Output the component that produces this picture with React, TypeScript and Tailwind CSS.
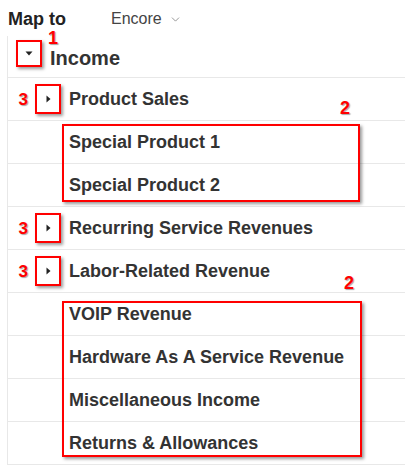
import { ChevronDown } from "lucide-react"

const redNum =
  "absolute text-[18px] font-bold leading-none text-[#ff0000] [text-shadow:1px_1px_1px_rgba(0,0,0,0.35)]"
const redBox = "border-2 border-[#ff0000] shadow-[2px_2px_3px_rgba(0,0,0,0.4)]"

function CaretRight() {
  return (
    <svg width="5" height="8" viewBox="0 0 5 8">
      <path d="M0.5 0.5 L4.5 4 L0.5 7.5 Z" fill="#222" />
    </svg>
  )
}

function CaretDown() {
  return (
    <svg width="8" height="5" viewBox="0 0 8 5">
      <path d="M0.5 0.5 L7.5 0.5 L4 4.5 Z" fill="#222" />
    </svg>
  )
}

function ParentRow({ label }: { label: string }) {
  return (
    <div className="flex h-[43px] items-center border-b border-[#e8e8e8]">
      <div className="w-[27px] pr-[7px] text-right text-[17px] font-bold leading-none text-[#ff0000] [text-shadow:1px_1px_1px_rgba(0,0,0,0.35)]">
        3
      </div>
      <div className={`flex h-[30px] w-[26px] items-center justify-center ${redBox}`}>
        <CaretRight />
      </div>
      <span className="ml-[8px] text-[18px] font-bold leading-none text-[#333]">{label}</span>
    </div>
  )
}

function ChildRow({ label }: { label: string }) {
  return (
    <div className="flex h-[43px] items-center border-b border-[#e8e8e8] pl-[61px]">
      <span className="text-[18px] font-bold leading-none text-[#333]">{label}</span>
    </div>
  )
}

export default function App() {
  return (
    <div className="relative h-[467px] w-[405px] overflow-hidden bg-white font-['Liberation_Sans',Arial,sans-serif]">
      <div className="flex h-[36px] items-start pl-[8px] pt-[10px]">
        <span className="w-[103px] text-[18px] font-bold leading-[18px] text-[#222]">Map to</span>
        <span className="flex items-center text-[16px] leading-[18px] text-[#444]">
          Encore
          <ChevronDown className="ml-[7px] h-[13px] w-[13px] text-[#666]" strokeWidth={1.25} />
        </span>
      </div>

      <div className="ml-[7px] border-l border-[#e8e8e8]">
        <div className="flex h-[42px] items-center border-b border-[#e8e8e8]">
          <div className={`ml-[8px] -mt-[6px] flex h-[27px] w-[26px] items-center justify-center ${redBox}`}>
            <CaretDown />
          </div>
          <span className="ml-[8px] mt-[2px] text-[20px] font-bold leading-none text-[#333]">Income</span>
        </div>

        <ParentRow label="Product Sales" />
        <ChildRow label="Special Product 1" />
        <ChildRow label="Special Product 2" />
        <ParentRow label="Recurring Service Revenues" />
        <ParentRow label="Labor-Related Revenue" />
        <ChildRow label="VOIP Revenue" />
        <ChildRow label="Hardware As A Service Revenue" />
        <ChildRow label="Miscellaneous Income" />
        <ChildRow label="Returns & Allowances" />
      </div>

      {/* annotations */}
      <span className={`${redNum} left-[48px] top-[29px] text-[17px]`}>1</span>
      <span className={`${redNum} left-[340px] top-[99px]`}>2</span>
      <span className={`${redNum} left-[344px] top-[274px]`}>2</span>
      <div className={`absolute left-[62px] top-[124px] h-[78px] w-[298px] ${redBox}`} />
      <div className={`absolute left-[62px] top-[301px] h-[156px] w-[300px] ${redBox}`} />
    </div>
  )
}
